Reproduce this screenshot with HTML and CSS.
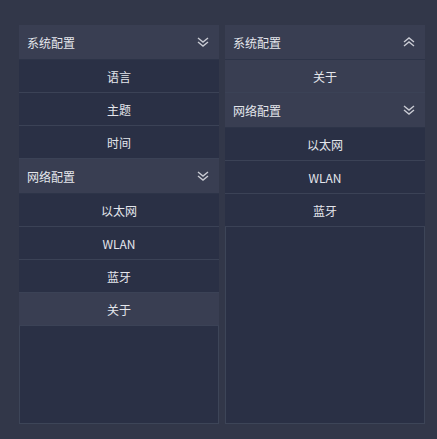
FILE: index.html
```html
<!DOCTYPE html>
<html lang="zh-CN">
  <head>
    <meta charset="UTF-8" />
    <meta name="viewport" content="width=device-width, initial-scale=1.0" />
    <title>Menu</title>
    <link rel="stylesheet" href="styles.css">
  </head>
  <body>
    <div class="page">
      <div class="menu">
        <div class="menu-header">
          <span>系统配置</span>
          <svg class="arrow" width="12" height="10" viewBox="0 0 12 10">
            <path d="M1 1 L6 5 L11 1 M1 5 L6 9 L11 5" />
          </svg>
        </div>
        <div class="menu-item">语言</div>
        <div class="menu-item">主题</div>
        <div class="menu-item">时间</div>
        <div class="menu-header">
          <span>网络配置</span>
          <svg class="arrow" width="12" height="10" viewBox="0 0 12 10">
            <path d="M1 1 L6 5 L11 1 M1 5 L6 9 L11 5" />
          </svg>
        </div>
        <div class="menu-item">以太网</div>
        <div class="menu-item">WLAN</div>
        <div class="menu-item">蓝牙</div>
        <div class="menu-item active">关于</div>
        <div class="menu-rest"></div>
      </div>

      <div class="menu">
        <div class="menu-header">
          <span>系统配置</span>
          <svg class="arrow" width="12" height="10" viewBox="0 0 12 10">
            <path d="M1 5 L6 1 L11 5 M1 9 L6 5 L11 9" />
          </svg>
        </div>
        <div class="menu-item active">关于</div>
        <div class="menu-header">
          <span>网络配置</span>
          <svg class="arrow" width="12" height="10" viewBox="0 0 12 10">
            <path d="M1 1 L6 5 L11 1 M1 5 L6 9 L11 5" />
          </svg>
        </div>
        <div class="menu-item">以太网</div>
        <div class="menu-item">WLAN</div>
        <div class="menu-item">蓝牙</div>
        <div class="menu-rest"></div>
      </div>
    </div>
  </body>
</html>
```

FILE: styles.css
```css
html,
body {
  margin: 0;
  height: 100%;
}
body {
  background: #323749;
  font-family: "Noto Sans CJK SC", "Noto Sans", sans-serif;
  font-size: 12px;
  color: #e4e6ec;
}
.page {
  display: flex;
  gap: 6px;
  padding: 25px 0 0 19px;
  height: 399px;
}
.menu {
  width: 200px;
  display: flex;
  flex-direction: column;
}
.menu-header {
  height: 34px;
  flex: none;
  display: flex;
  align-items: center;
  justify-content: space-between;
  padding: 0 10px 0 8px;
  background: #393e52;
  border-bottom: 1px solid #2d3448;
}
.arrow {
  fill: none;
  stroke: #c9cbd3;
  stroke-width: 1.4;
}
.menu-item {
  height: 32px;
  flex: none;
  display: flex;
  align-items: center;
  justify-content: center;
  background: #2a3045;
  border-bottom: 1px solid #3b4256;
}
.menu-item.active {
  background: #393e52;
}
.menu-rest {
  flex: 1;
  background: #2a3045;
  border: 1px solid #3d4558;
  border-top: none;
}
```
